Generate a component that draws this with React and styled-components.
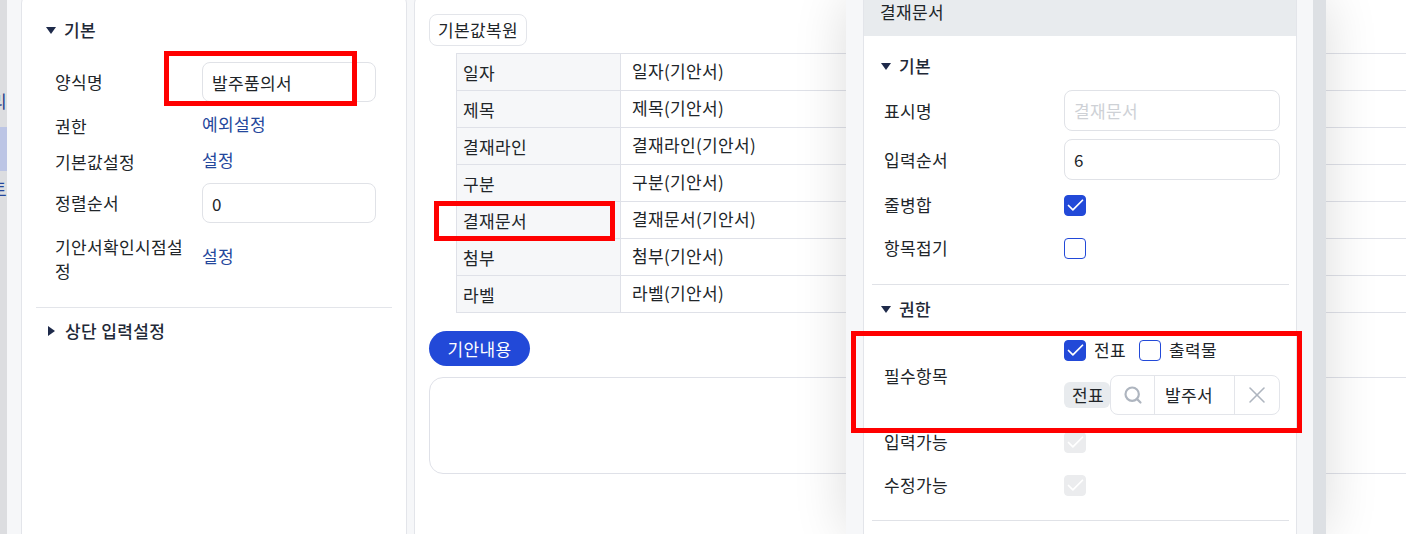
import React from 'react';
import styled, { createGlobalStyle } from 'styled-components';
import { Search, X, Check } from 'lucide-react';

const GlobalStyle = createGlobalStyle`
  * { box-sizing: border-box; }
  html, body { margin: 0; height: 100%; overflow: hidden; }
  body {
    background: #f6f7f9;
    color: #212529;
    font-family: "Noto Sans CJK KR", "Noto Sans", sans-serif;
    font-size: 17px;
    line-height: 24px;
    letter-spacing: 0.36px;
  }
`;

const Page = styled.div`
  position: relative;
  display: flex;
  width: 1406px;
  height: 534px;
  overflow: hidden;
`;

const SideStrip = styled.aside`
  flex: none;
  width: 7px;
  padding-top: 83px;
  background: #dcdde0;
  overflow: hidden;
`;

const SideItem = styled.div`
  display: flex;
  justify-content: flex-end;
  align-items: center;
  height: 44px;
  padding-bottom: 8px;
  color: ${(p) => p.$color || '#1e3a8a'};
  white-space: nowrap;
  background: ${(p) => (p.$active ? '#bcc5e5' : 'transparent')};
`;

const Workspace = styled.div`
  display: flex;
  flex: 1;
  gap: 7px;
  padding-left: 14px;
  min-width: 0;
`;

const Card = styled.section`
  background: #fff;
  border: 1px solid #e3e5ea;
  border-bottom: 0;
  border-radius: 12px 12px 0 0;
  margin-top: -8px;
`;

const LeftCard = styled(Card)`
  flex: none;
  width: 386px;
  padding: 8px 14px 0;
`;

const MainCard = styled(Card)`
  flex: 1;
  min-width: 0;
  margin-right: -40px;
  padding: 21px 0 0 14px;
`;

const Section = styled.div`
  padding: ${(p) => p.$pad || '17px 16px 24px 19px'};
  border-bottom: ${(p) => (p.$line ? '1px solid #e3e5ea' : '0')};
`;

const SectionTitle = styled.h3`
  display: flex;
  align-items: center;
  gap: 8px;
  margin: 0 0 0 ${(p) => p.$indent || -9}px;
  font-size: 17px;
  font-weight: 500;
  line-height: 24px;
  color: #1f2937;
`;

const Caret = styled.span`
  flex: none;
  width: 0;
  height: 0;
  ${(p) =>
    p.$open
      ? `border-left: 5.5px solid transparent;
         border-right: 5.5px solid transparent;
         border-top: 7px solid #1e2a4a;`
      : `margin: 0 2px 0 2px;
         border-top: 5.5px solid transparent;
         border-bottom: 5.5px solid transparent;
         border-left: 7px solid #1e2a4a;`}
`;

const Row = styled.div`
  display: grid;
  grid-template-columns: ${(p) => p.$label || 147}px 1fr;
  align-items: center;
  margin-top: ${(p) => p.$top || 0}px;
`;

const Label = styled.div`
  padding-right: 8px;
  padding-bottom: ${(p) => p.$lift || 0}px;
`;

const TextInput = styled.input`
  display: block;
  width: 100%;
  height: ${(p) => p.$h || 40}px;
  padding: 0 9px;
  background: #fff;
  border: 1px solid #e0e2e7;
  border-radius: 8px;
  outline: none;
  color: #212529;
  font: inherit;
  letter-spacing: inherit;
  &::placeholder { color: #ced1d6; }
`;

const LinkText = styled.a`
  display: block;
  margin-top: -${(p) => p.$lift || 2}px;
  margin-bottom: ${(p) => p.$lift || 2}px;
  color: #24479c;
  text-decoration: none;
`;

const GhostButton = styled.button`
  display: block;
  width: 98px;
  height: 32px;
  padding: 0;
  background: #fff;
  border: 1px solid #e3e5ea;
  border-radius: 8px;
  color: #212529;
  font: inherit;
  letter-spacing: inherit;
`;

const PillButton = styled.button`
  display: block;
  width: 101px;
  height: 35px;
  margin-top: 18px;
  padding: 0;
  background: #2249d8;
  border: 0;
  border-radius: 18px;
  color: #fff;
  font: inherit;
  letter-spacing: inherit;
`;

const FieldTable = styled.table`
  width: calc(100% - 27px);
  margin: 7px 0 0 27px;
  border-collapse: collapse;
  table-layout: fixed;
  td {
    height: 37px;
    padding: 0 0 2px 11px;
    border: 1px solid #dfe1e8;
  }
  td:first-child {
    width: 164px;
    padding: 2px 0 0 6px;
    background: #f6f7f9;
  }
`;

const ContentBox = styled.div`
  height: 97px;
  margin-top: 11px;
  background: #fff;
  border: 1px solid #dfe1e8;
  border-radius: 14px;
`;

const Drawer = styled.div`
  position: absolute;
  top: 0;
  bottom: 0;
  left: 846px;
  display: flex;
  width: 480px;
  background: #f6f7f9;
  box-shadow: 0 0 50px rgba(0, 0, 0, 0.14);
`;

const DrawerBody = styled.div`
  flex: 1;
  min-width: 0;
  padding: 0 16px 0 17px;
  overflow: hidden;
`;

const ScrollTrack = styled.div`
  flex: none;
  width: 13px;
  background: #dde0e4;
`;

const Panel = styled.div`
  height: 560px;
  background: #fff;
  border: 1px solid #e3e5ea;
  border-width: 0 1px;
`;

const PanelHeader = styled.div`
  height: 36px;
  padding: 0 0 0 16px;
  background: #e8ebee;
  line-height: 24px;
`;

const Divider = styled.hr`
  height: 1px;
  margin: ${(p) => p.$top}px 7px 0 8px;
  border: 0;
  background: #e0e2e7;
`;

const CheckBox = styled.span`
  display: inline-flex;
  flex: none;
  align-items: center;
  justify-content: center;
  width: 22px;
  height: 21px;
  background: ${(p) => (p.$on ? '#2249d8' : p.$off ? '#ebecee' : '#fff')};
  border: 1px solid ${(p) => (p.$off ? '#ebecee' : '#2249d8')};
  border-radius: 4px;
  color: #fff;
  overflow: hidden;
`;

const CheckGroup = styled.div`
  display: flex;
  align-items: center;
`;

const CheckLabel = styled.span`
  margin: 0 13px 0 8px;
`;

const RefRow = styled.div`
  display: flex;
  align-items: center;
  margin-top: 13px;
`;

const Tag = styled.span`
  flex: none;
  width: 46px;
  height: 26px;
  margin-top: -1px;
  padding-left: 8px;
  background: #e8ebee;
  border-radius: 6px;
  line-height: 26px;
`;

const SearchGroup = styled.div`
  display: flex;
  flex: 1;
  align-items: stretch;
  height: 40px;
  background: #fff;
  border: 1px solid #e3e5ea;
  border-radius: 8px;
  color: #aeb5bf;
`;

const SearchIcon = styled.span`
  display: flex;
  flex: none;
  align-items: center;
  justify-content: center;
  width: ${(p) => p.$w}px;
`;

const SearchText = styled.span`
  flex: 1;
  padding-left: 10px;
  border: 1px solid #e3e5ea;
  border-width: 0 1px;
  color: #212529;
  line-height: 38px;
`;

const Marker = styled.div`
  position: absolute;
  top: ${(p) => p.$y}px;
  left: ${(p) => p.$x}px;
  width: ${(p) => p.$w}px;
  height: ${(p) => p.$h}px;
  border: 5px solid #ff0000;
  pointer-events: none;
`;

const fields = ['일자', '제목', '결재라인', '구분', '결재문서', '첨부', '라벨'];

const Tick = () => <Check size={21} strokeWidth={2} style={{ flex: 'none' }} />;

export default function App() {
  return (
    <Page>
      <GlobalStyle />
      <SideStrip>
        <SideItem>관리</SideItem>
        <SideItem $active />
        <SideItem $color="#24479c">토</SideItem>
      </SideStrip>

      <Workspace>
        <LeftCard>
          <Section $line>
            <SectionTitle>
              <Caret $open />
              기본
            </SectionTitle>
            <Row $top={20}>
              <Label>양식명</Label>
              <TextInput readOnly value="발주품의서" />
            </Row>
            <Row $top={12}>
              <Label>권한</Label>
              <LinkText>예외설정</LinkText>
            </Row>
            <Row $top={12}>
              <Label>기본값설정</Label>
              <LinkText>설정</LinkText>
            </Row>
            <Row $top={9}>
              <Label>정렬순서</Label>
              <TextInput readOnly value="0" />
            </Row>
            <Row $top={12}>
              <Label>기안서확인시점설정</Label>
              <LinkText $lift={3}>설정</LinkText>
            </Row>
          </Section>
          <Section $pad="11px 16px 0 19px">
            <SectionTitle>
              <Caret />
              상단 입력설정
            </SectionTitle>
          </Section>
        </LeftCard>

        <MainCard>
          <GhostButton>기본값복원</GhostButton>
          <FieldTable>
            <tbody>
              {fields.map((name) => (
                <tr key={name}>
                  <td>{name}</td>
                  <td>{name}(기안서)</td>
                </tr>
              ))}
            </tbody>
          </FieldTable>
          <PillButton>기안내용</PillButton>
          <ContentBox />
        </MainCard>
      </Workspace>

      <Drawer>
        <DrawerBody>
          <Panel>
            <PanelHeader>결재문서</PanelHeader>
            <Section $pad="18px 16px 0 20px">
              <SectionTitle $indent={-3}>
                <Caret $open />
                기본
              </SectionTitle>
              <Row $label={180} $top={12}>
                <Label>표시명</Label>
                <TextInput $h={41} readOnly placeholder="결재문서" />
              </Row>
              <Row $label={180} $top={8}>
                <Label>입력순서</Label>
                <TextInput $h={41} readOnly value="6" />
              </Row>
              <Row $label={180} $top={13}>
                <Label>줄병합</Label>
                <CheckBox $on>
                  <Tick />
                </CheckBox>
              </Row>
              <Row $label={180} $top={19}>
                <Label>항목접기</Label>
                <CheckBox />
              </Row>
            </Section>
            <Divider $top={24} />
            <Section $pad="12px 16px 0 20px">
              <SectionTitle $indent={-3}>
                <Caret $open />
                권한
              </SectionTitle>
              <Row $label={180} $top={17}>
                <Label $lift={2}>필수항목</Label>
                <div>
                  <CheckGroup>
                    <CheckBox $on>
                      <Tick />
                    </CheckBox>
                    <CheckLabel>전표</CheckLabel>
                    <CheckBox />
                    <CheckLabel>출력물</CheckLabel>
                  </CheckGroup>
                  <RefRow>
                    <Tag>전표</Tag>
                    <SearchGroup>
                      <SearchIcon $w={43}>
                        <Search size={20} strokeWidth={2.6} />
                      </SearchIcon>
                      <SearchText>발주서</SearchText>
                      <SearchIcon $w={44}>
                        <X size={28} strokeWidth={1.3} />
                      </SearchIcon>
                    </SearchGroup>
                  </RefRow>
                </div>
              </Row>
              <Row $label={180} $top={15}>
                <Label>입력가능</Label>
                <CheckBox $off>
                  <Tick />
                </CheckBox>
              </Row>
              <Row $label={180} $top={19}>
                <Label>수정가능</Label>
                <CheckBox $off>
                  <Tick />
                </CheckBox>
              </Row>
            </Section>
            <Divider $top={23} />
          </Panel>
        </DrawerBody>
        <ScrollTrack />
      </Drawer>

      <Marker $x={164} $y={51} $w={193} $h={55} />
      <Marker $x={434} $y={201} $w={181} $h={40} />
      <Marker $x={851} $y={331} $w={451} $h={102} />
    </Page>
  );
}
